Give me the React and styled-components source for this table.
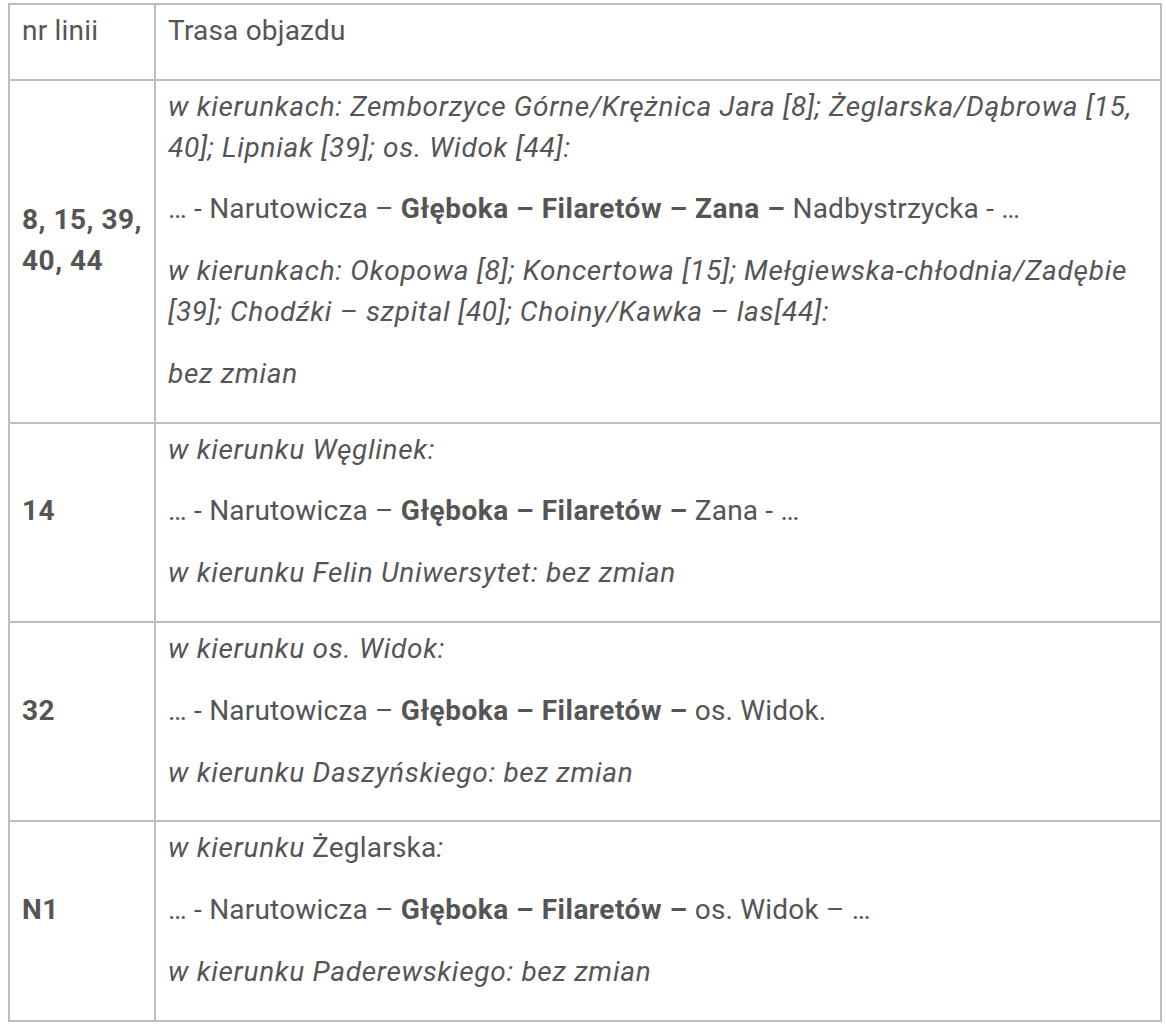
import React from "react";
import styled, { createGlobalStyle } from "styled-components";

const GlobalStyle = createGlobalStyle`
  body {
    margin: 0;
    background: #fff;
    font-family: Roboto, "Liberation Sans", sans-serif;
  }
`;

const Page = styled.div`
  padding: 3px 4px 0 8px;
`;

const Table = styled.table`
  width: 1154px;
  table-layout: fixed;
  border-collapse: collapse;
  color: #555;
  font-size: 28px;
  line-height: 40.8px;
  letter-spacing: 0.2px;
`;

const Cell = styled.td`
  border: 2px solid #bdbdbd;
  padding: 6px 12px;
  vertical-align: ${(p) => (p.$middle ? "middle" : "top")};

  b {
    font-weight: 700;
    letter-spacing: 0.5px;
  }

  em {
    letter-spacing: 0.7px;
  }
`;

const P = styled.p`
  margin: 0 0 21px;
`;

const rows = [
  {
    line: "8, 15, 39, 40, 44",
    content: (
      <>
        <P>
          <em>
            w kierunkach: Zemborzyce Górne/Krężnica Jara [8]; Żeglarska/Dąbrowa
            [15, 40]; Lipniak [39]; os. Widok [44]:
          </em>
        </P>
        <P>
          … - Narutowicza – <b>Głęboka – Filaretów – Zana –</b> Nadbystrzycka
          - …
        </P>
        <P>
          <em>
            w kierunkach: Okopowa [8]; Koncertowa [15]; Mełgiewska-chłodnia/Zadębie
            [39]; Chodźki – szpital [40]; Choiny/Kawka – las[44]:
          </em>
        </P>
        <P>
          <em>bez zmian</em>
        </P>
      </>
    ),
  },
  {
    line: "14",
    content: (
      <>
        <P>
          <em>w kierunku Węglinek:</em>
        </P>
        <P>
          … - Narutowicza – <b>Głęboka – Filaretów –</b> Zana - …
        </P>
        <P>
          <em>w kierunku Felin Uniwersytet: bez zmian</em>
        </P>
      </>
    ),
  },
  {
    line: "32",
    content: (
      <>
        <P>
          <em>w kierunku os. Widok:</em>
        </P>
        <P>
          … - Narutowicza – <b>Głęboka – Filaretów –</b> os. Widok.
        </P>
        <P>
          <em>w kierunku Daszyńskiego: bez zmian</em>
        </P>
      </>
    ),
  },
  {
    line: "N1",
    content: (
      <>
        <P>
          <em>w kierunku</em> Żeglarska<em>:</em>
        </P>
        <P>
          … - Narutowicza – <b>Głęboka – Filaretów –</b> os. Widok – …
        </P>
        <P>
          <em>w kierunku Paderewskiego: bez zmian</em>
        </P>
      </>
    ),
  },
];

export default function App() {
  return (
    <>
      <GlobalStyle />
      <Page>
        <Table>
          <colgroup>
            <col style={{ width: 146 }} />
            <col />
          </colgroup>
          <tbody>
            <tr>
              <Cell>
                <P>nr linii</P>
              </Cell>
              <Cell>
                <P>Trasa objazdu</P>
              </Cell>
            </tr>
            {rows.map((row) => (
              <tr key={row.line}>
                <Cell $middle>
                  <P>
                    <b>{row.line}</b>
                  </P>
                </Cell>
                <Cell>{row.content}</Cell>
              </tr>
            ))}
          </tbody>
        </Table>
      </Page>
    </>
  );
}
